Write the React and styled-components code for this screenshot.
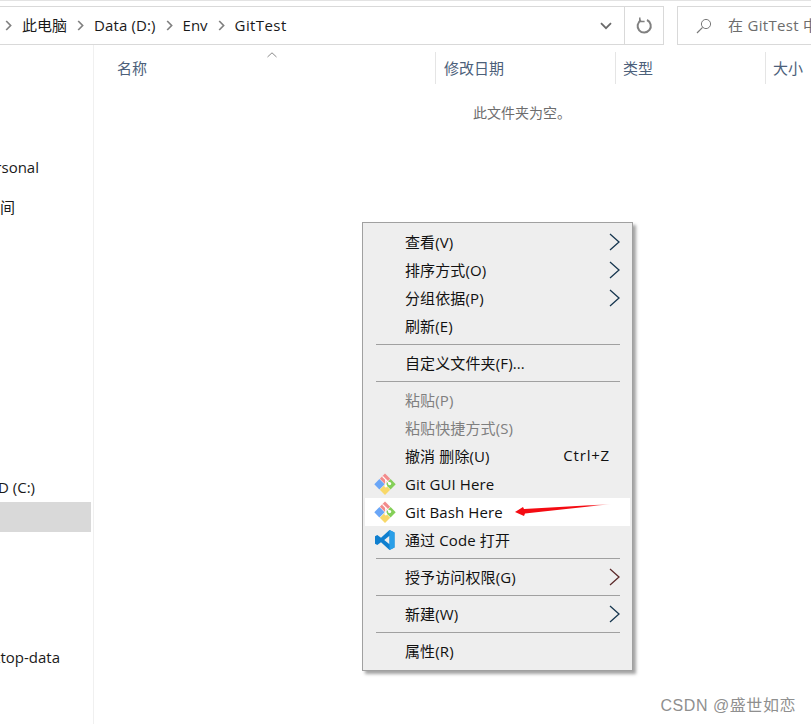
import React from 'react';
import styled, { createGlobalStyle } from 'styled-components';

const FONT = `"Open Sans", "Noto Sans CJK SC", "Noto Sans", sans-serif`;

const Global = createGlobalStyle`
    html, body {
        margin: 0;
        padding: 0;
        height: 100%;
        overflow: hidden;
        background: #ffffff;
        font-family: ${FONT};
    }
`;

const Window = styled.div`
    position: relative;
    width: 811px;
    height: 724px;
    overflow: hidden;
    background: #ffffff;
`;

const Toolbar = styled.div`
    display: flex;
    align-items: stretch;
    height: 39px;
    padding-top: 5px;
    border-top: 1px solid #e3e3e3;
`;

const Address = styled.div`
    display: flex;
    align-items: center;
    width: 625px;
    box-sizing: border-box;
    padding-bottom: 2px;
    border: 1px solid #d9d9d9;
    border-left: none;
    font-size: 15px;
    color: #1a1a1a;
`;

const Crumbs = styled.div`
    flex: 1;
    display: flex;
    align-items: center;
    padding-left: 5px;
`;

const CrumbSep = styled.svg`
    width: 7px;
    height: 11px;
    margin: 2px 10px 0 0;
    &:not(:first-child) {
        margin-left: 10px;
    }
`;

const CrumbText = styled.span`
    letter-spacing: ${(p) => p.$track || 0}px;
`;

const DropButton = styled.div`
    display: flex;
    justify-content: center;
    width: 14px;
    margin: 2px 11px 0 0;
`;

const RefreshBox = styled.div`
    display: flex;
    align-items: center;
    justify-content: center;
    width: 39px;
    box-sizing: border-box;
    border: 1px solid #d9d9d9;
    border-left: none;
`;

const SearchBox = styled.div`
    display: flex;
    align-items: center;
    margin-left: 13px;
    flex: 1;
    min-width: 0;
    padding-left: 18px;
    border: 1px solid #d9d9d9;
    border-right: none;
    font-size: 15px;
    color: #6d6d6d;
    white-space: nowrap;
    overflow: hidden;
`;

const SearchIcon = styled.svg`
    flex: none;
    width: 16px;
    height: 16px;
`;

const SearchText = styled.span`
    margin: 0 0 2px 16px;
    letter-spacing: 0.3px;
`;

const Body = styled.div`
    display: flex;
    height: 679px;
`;

const Sidebar = styled.div`
    width: 93px;
    padding-top: 108px;
    border-right: 1px solid #f0f0f0;
`;

const SideRow = styled.div`
    display: flex;
    align-items: center;
    justify-content: flex-end;
    width: 91px;
    height: ${(p) => p.$height || 30}px;
    margin-top: ${(p) => p.$gap || 0}px;
    padding: 0 ${(p) => p.$inset || 0}px 2px 0;
    box-sizing: border-box;
    overflow: hidden;
    white-space: nowrap;
    font-size: 15px;
    color: #1a1a1a;
    background: ${(p) => (p.$selected ? '#d9d9d9' : 'transparent')};
`;

const Main = styled.div`
    flex: 1;
    padding-top: 7px;
`;

const Columns = styled.div`
    display: flex;
    height: 32px;
`;

const Column = styled.div`
    position: relative;
    display: flex;
    align-items: center;
    width: ${(p) => p.$width}px;
    box-sizing: border-box;
    padding-left: ${(p) => p.$pad}px;
    padding-bottom: 2px;
    border-right: ${(p) => (p.$last ? 'none' : '1px solid #e5e5e5')};
    font-size: 15px;
    color: #4c607a;
    white-space: nowrap;
`;

const SortMark = styled.svg`
    position: absolute;
    top: 0;
    left: 173px;
`;

const Empty = styled.div`
    margin-top: 19px;
    padding-left: 379px;
    font-size: 14px;
    line-height: 20px;
    color: #6d6d6d;
`;

const Menu = styled.div`
    position: absolute;
    left: 362px;
    top: 222px;
    width: 271px;
    box-sizing: border-box;
    padding: 5px 2px;
    background: #eeeeee;
    border: 1px solid #a0a0a0;
    box-shadow: 3px 3px 3px rgba(90, 90, 90, 0.55);
    font-size: 15px;
`;

const Item = styled.div`
    position: relative;
    display: flex;
    align-items: center;
    height: 28px;
    box-sizing: border-box;
    padding: 0 0 ${(p) => (p.$latin ? 0 : 2)}px 40px;
    letter-spacing: 0.12px;
    color: ${(p) => (p.$disabled ? '#7f7f7f' : '#111111')};
    background: ${(p) => (p.$hover ? '#ffffff' : 'transparent')};
    white-space: nowrap;
`;

const ItemIcon = styled.svg`
    position: absolute;
    left: 9px;
    top: 3px;
    width: 22px;
    height: 22px;
`;

const Shortcut = styled.span`
    position: absolute;
    right: 20px;
    letter-spacing: 0.8px;
`;

const Arrow = styled.svg`
    position: absolute;
    right: 10px;
    top: 5px;
    width: 12px;
    height: 18px;
`;

const Separator = styled.div`
    height: 1px;
    margin: 4px 10px 4px 11px;
    background: #a0a0a0;
`;

const Pointer = styled.svg`
    position: absolute;
    left: 148px;
    top: 3px;
    width: 102px;
    height: 20px;
`;

const Watermark = styled.div`
    position: absolute;
    right: 15px;
    bottom: 8px;
    font-family: "Liberation Sans", "Noto Sans CJK SC", sans-serif;
    font-size: 16px;
    letter-spacing: 0.55px;
    color: #8f8f8f;
    white-space: nowrap;
`;

const Chevron = () => (
    <CrumbSep viewBox="0 0 7 11">
        <path d="M1.2 1 L5.6 5.5 L1.2 10" fill="none" stroke="#808080" strokeWidth="1.7" />
    </CrumbSep>
);

const SubArrow = ({ color = '#16364f' }) => (
    <Arrow viewBox="0 0 12 18">
        <path d="M2 1 L11 9 L2 17" fill="none" stroke={color} strokeWidth="1.3" />
    </Arrow>
);

const GitIcon = () => (
    <ItemIcon viewBox="0 0 22 22">
        <path d="M11 0.5 L16.2 5.7 L11 11 L5.8 5.7 Z" fill="#f28b8b" />
        <path d="M5.4 6 L10.6 11.2 L5.4 16.4 L0.3 11.2 Z" fill="#6aa6f7" />
        <path d="M16.6 6 L21.7 11.2 L16.6 16.4 L11.4 11.2 Z" fill="#84cf58" />
        <path d="M11 11.6 L16.2 16.8 L11 22 L5.8 16.8 Z" fill="#f8d868" />
        <path d="M8.5 3.4 L15.6 10.6" stroke="#ffffff" strokeWidth="1.3" />
        <path d="M11.8 6.8 V13" stroke="#ffffff" strokeWidth="1.3" />
        <circle cx="15.6" cy="10.6" r="1.6" fill="#ffffff" />
        <circle cx="11.8" cy="13" r="1.4" fill="#ffffff" />
    </ItemIcon>
);

const CodeIcon = () => (
    <ItemIcon viewBox="0 0 22 22">
        <path d="M15.5 1 L20.5 3.4 V18.6 L15.5 21 L7 13.2 L3.3 16 L1 14.8 V7.2 L3.3 6 L7 8.8 Z M15.5 6.8 L10.2 11 L15.5 15.2 Z" fill="#0f7fcf" fillRule="evenodd" />
        <path d="M15.5 1 L20.5 3.4 V18.6 L15.5 21 Z" fill="#2a9fe8" />
    </ItemIcon>
);

const App = () => {
    return (
        <Window>
            <Global />
            <Toolbar>
                <Address>
                    <Crumbs>
                        <Chevron />
                        <CrumbText>此电脑</CrumbText>
                        <Chevron />
                        <CrumbText $track={0.12}>Data (D:)</CrumbText>
                        <Chevron />
                        <CrumbText>Env</CrumbText>
                        <Chevron />
                        <CrumbText $track={0.4}>GitTest</CrumbText>
                    </Crumbs>
                    <DropButton>
                        <svg width="12" height="8" viewBox="0 0 12 8">
                            <path d="M1 1.2 L6 6.2 L11 1.2" fill="none" stroke="#6a6a6a" strokeWidth="1.8" />
                        </svg>
                    </DropButton>
                </Address>
                <RefreshBox>
                    <svg width="17" height="17" viewBox="0 0 17 17">
                        <path d="M11 3 A6.6 6.6 0 1 1 5 3.2" fill="none" stroke="#808080" strokeWidth="2" />
                        <path d="M3.8 0.6 V4.4 H8.6" fill="none" stroke="#808080" strokeWidth="1.5" />
                    </svg>
                </RefreshBox>
                <SearchBox>
                    <SearchIcon viewBox="0 0 16 16">
                        <circle cx="10" cy="6" r="4.6" fill="none" stroke="#7a7a7a" strokeWidth="1" />
                        <path d="M6.6 9.4 L1 15" stroke="#7a7a7a" strokeWidth="1.2" />
                    </SearchIcon>
                    <SearchText>在 GitTest 中</SearchText>
                </SearchBox>
            </Toolbar>
            <Body>
                <Sidebar>
                    <SideRow $inset={52}>OneDrive - Personal</SideRow>
                    <SideRow $gap={9} $inset={76}>时间</SideRow>
                    <SideRow $gap={251} $height={29} $inset={56}>SSD (C:)</SideRow>
                    <SideRow $selected />
                    <SideRow $gap={111} $inset={31}>Desktop-data</SideRow>
                </Sidebar>
                <Main>
                    <Columns>
                        <Column $width={342} $pad={23}>
                            名称
                            <SortMark width="10" height="6" viewBox="0 0 10 6">
                                <path d="M0.5 5 L5 0.8 L9.5 5" fill="none" stroke="#8a8a8a" strokeWidth="1" />
                            </SortMark>
                        </Column>
                        <Column $width={180} $pad={8}>修改日期</Column>
                        <Column $width={150} $pad={7}>类型</Column>
                        <Column $width={45} $pad={7} $last>大小</Column>
                    </Columns>
                    <Empty>此文件夹为空。</Empty>
                </Main>
            </Body>
            <Menu>
                <Item>查看(V)<SubArrow /></Item>
                <Item>排序方式(O)<SubArrow /></Item>
                <Item>分组依据(P)<SubArrow /></Item>
                <Item>刷新(E)</Item>
                <Separator />
                <Item>自定义文件夹(F)...</Item>
                <Separator />
                <Item $disabled>粘贴(P)</Item>
                <Item $disabled>粘贴快捷方式(S)</Item>
                <Item>撤消 删除(U)<Shortcut>Ctrl+Z</Shortcut></Item>
                <Item $latin><GitIcon />Git GUI Here</Item>
                <Item $latin $hover>
                    <GitIcon />Git Bash Here
                    <Pointer viewBox="0 0 102 20">
                        <defs>
                            <linearGradient id="tail" x1="0" x2="1" y1="0" y2="0">
                                <stop offset="0.75" stopColor="#f40b12" />
                                <stop offset="1" stopColor="#f40b12" stopOpacity="0" />
                            </linearGradient>
                        </defs>
                        <path d="M2 11 L10 6 L11 8 L99 3 L12 12.5 L11 15 Z" fill="url(#tail)" />
                    </Pointer>
                </Item>
                <Item><CodeIcon />通过 Code 打开</Item>
                <Separator />
                <Item>授予访问权限(G)<SubArrow color="#5c2a2a" /></Item>
                <Separator />
                <Item>新建(W)<SubArrow /></Item>
                <Separator />
                <Item>属性(R)</Item>
            </Menu>
            <Watermark>CSDN @盛世如恋</Watermark>
        </Window>
    );
};

export default App;
